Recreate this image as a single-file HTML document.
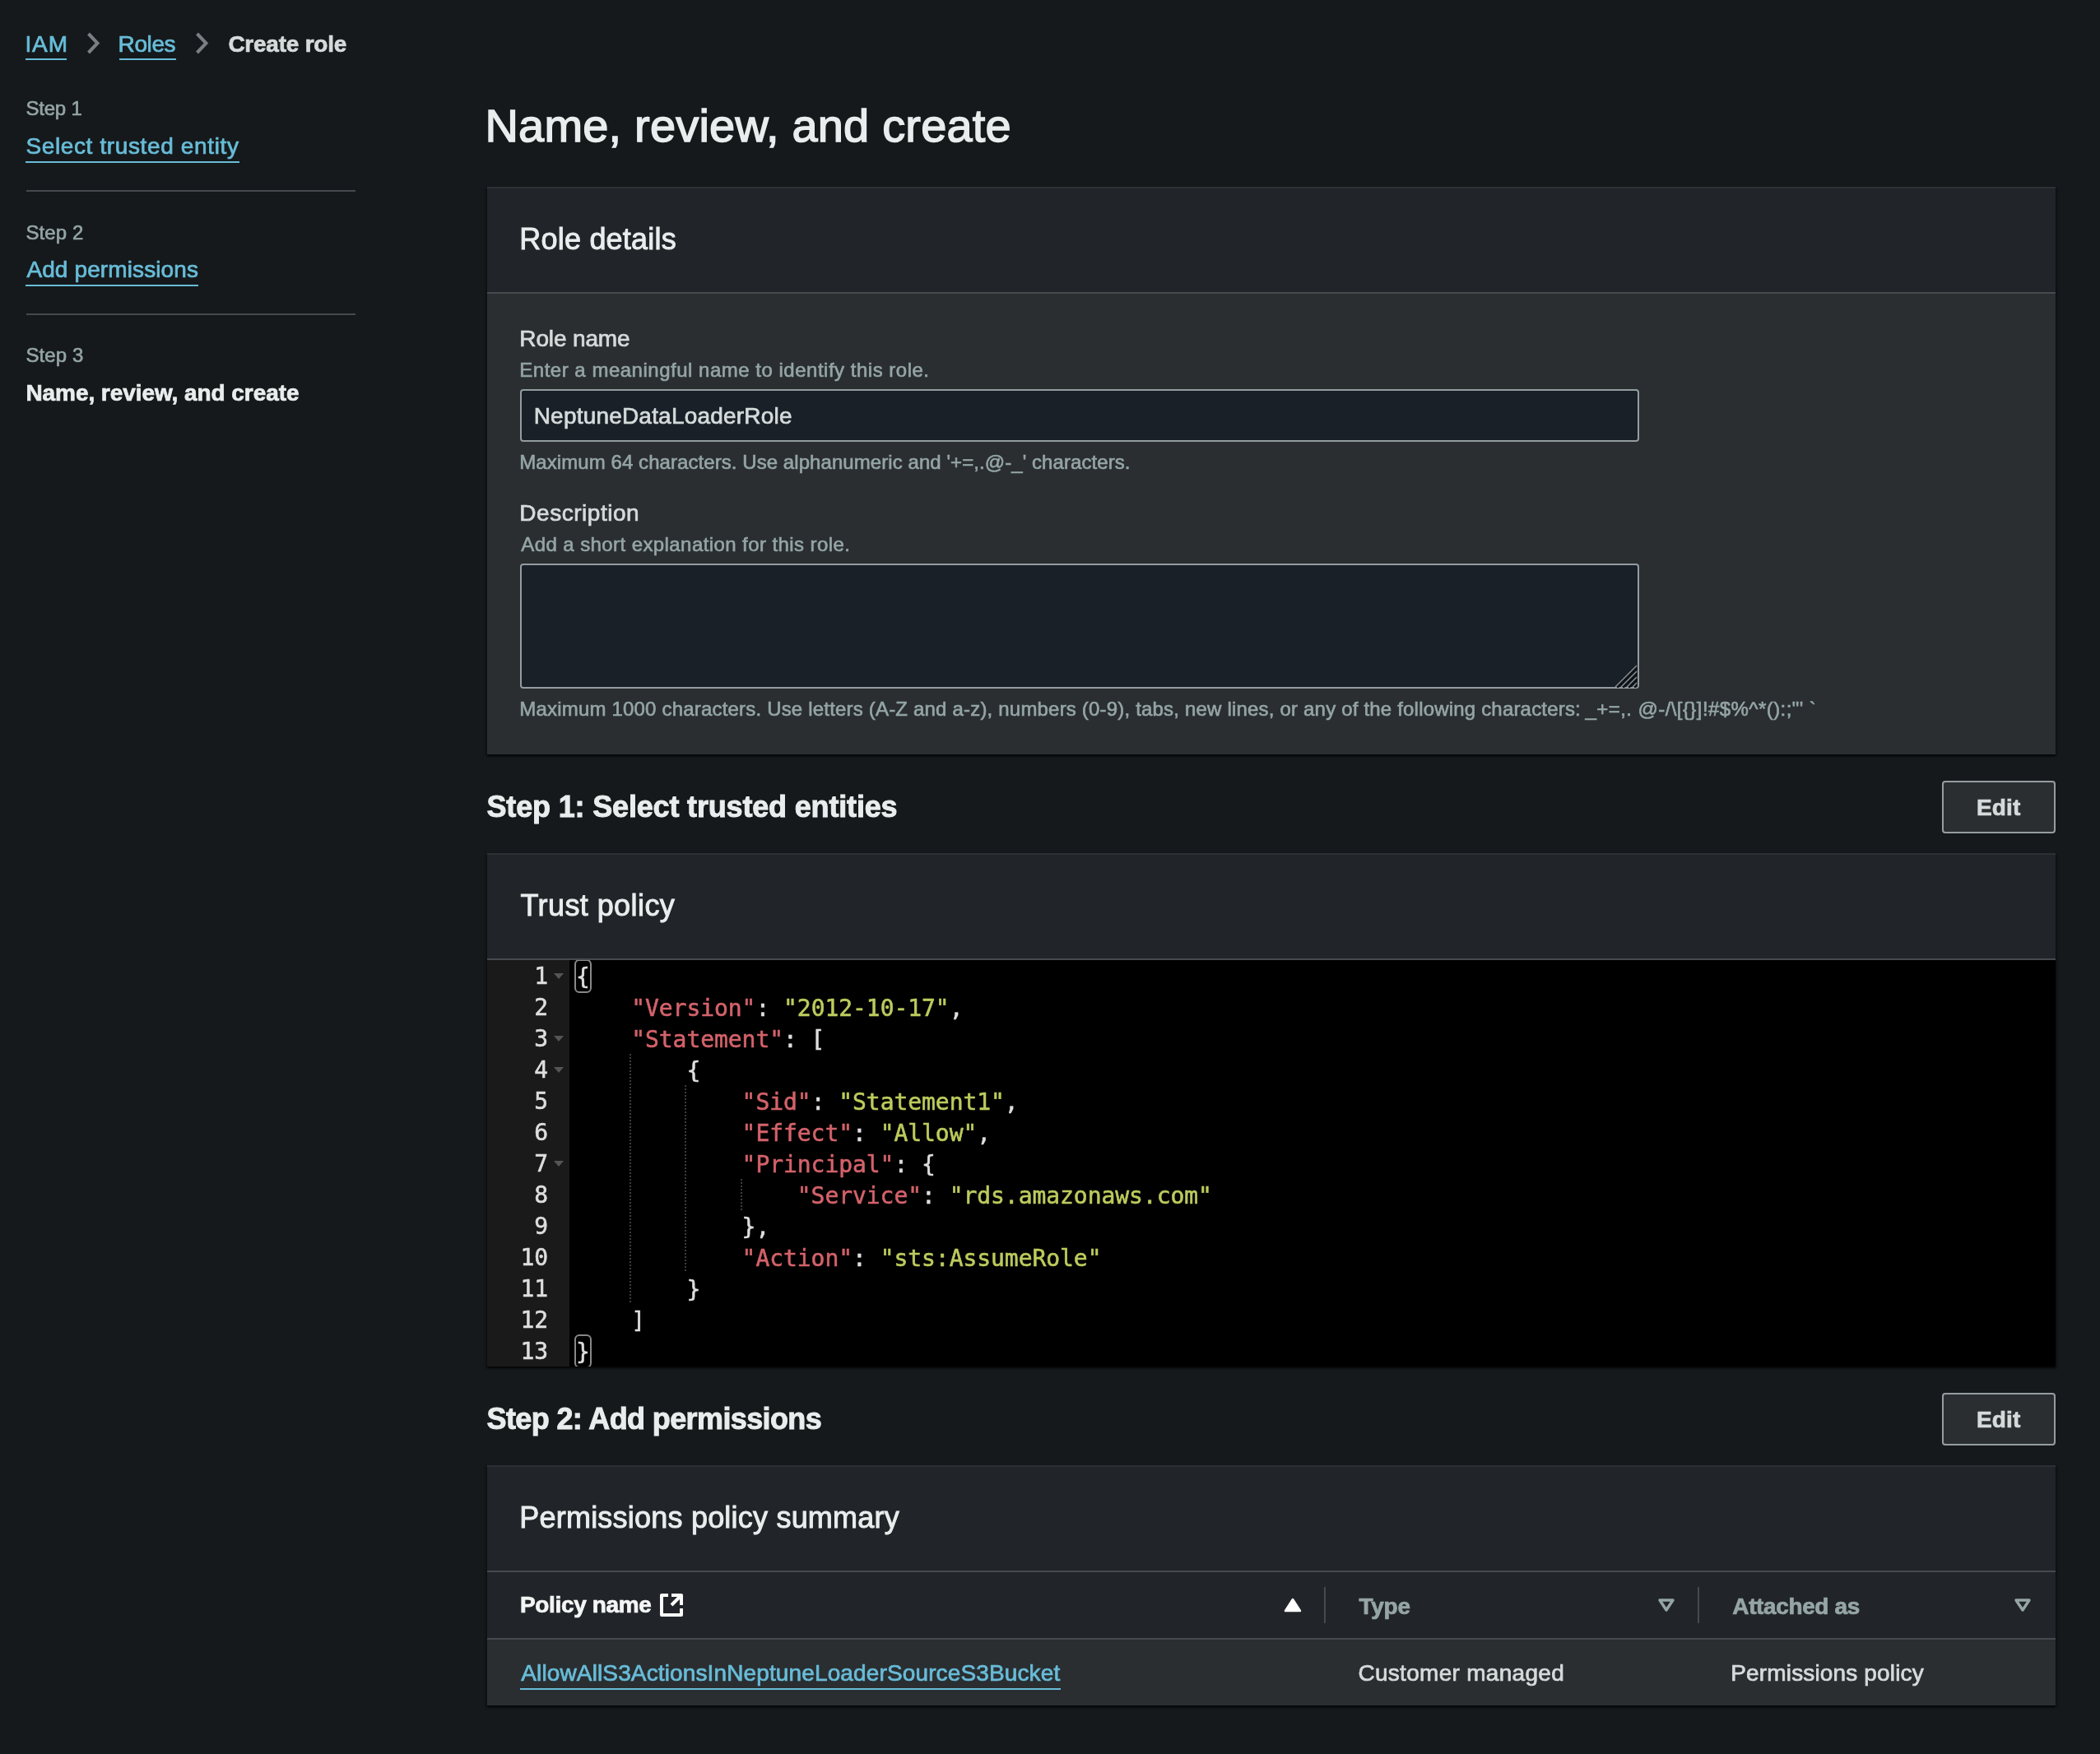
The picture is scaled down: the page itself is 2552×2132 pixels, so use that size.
<!DOCTYPE html>
<html lang="en">
<head>
<meta charset="utf-8">
<title>Create role - IAM</title>
<style>
*{margin:0;padding:0;box-sizing:border-box}
html,body{width:2552px;height:2132px;overflow:hidden;background:#15191b}
body{position:relative;font-family:"Liberation Sans", "Helvetica Neue", Arial, sans-serif;color:#d5dbdb;}
@media (max-width:1400px){html{zoom:.5}}
#root{position:absolute;left:0;top:0;width:2552px;height:2132px;will-change:transform}
.t{position:absolute;white-space:pre;line-height:1;font-weight:400;text-decoration:none;display:block;-webkit-text-stroke:0.026em}
.b{-webkit-text-stroke:0.026em}
.u{text-decoration:none}
.u::after{content:"";position:absolute;left:var(--ul,0);width:var(--uw,100%);height:2px;background:#68bcd8;bottom:var(--ub,-7px)}
.box{position:absolute}
.card{position:absolute;left:592px;width:1906px;background:#2a2e31;box-shadow:0 2px 2px 0 rgba(0,0,0,.6),2px 2px 3px 0 rgba(0,0,0,.3),-2px 2px 3px 0 rgba(0,0,0,.3)}
.card .hd{position:absolute;left:0;right:0;top:0;height:130px;background:#212428;border-top:2px solid #2d3136;border-bottom:2px solid #464a4e}
.field{position:absolute;left:632px;width:1360px;background:#1a2028;border:2px solid #939c9f;border-radius:4px}
.btn{position:absolute;left:2360px;width:138px;height:64px;background:#2a2e31;border:2px solid #969da1;border-radius:4px}
.hr{position:absolute;left:32px;width:400px;height:2px;background:#464a4e}
.code{position:absolute;left:0;top:130px;width:1906px;height:494px;background:#000;overflow:hidden;font-family:"DejaVu Sans Mono", "Liberation Mono", monospace;font-size:28px;line-height:38px;color:#dedede;-webkit-text-stroke:0.02em;letter-spacing:-0.057px}
.gut{position:absolute;left:0;top:0;width:100px;height:494px;background:#1a1a1a}
.ln{position:absolute;left:0;width:74px;height:38px;text-align:right;white-space:pre}
.fold{position:absolute;left:81px;width:0;height:0;border-left:6px solid transparent;border-right:6px solid transparent;border-top:7px solid #555}
.cl{position:absolute;left:108px;height:38px;white-space:pre}
.k{color:#d3626a}.s{color:#bdcb5d}
.br{position:absolute;width:21px;height:41px;border:2px solid #888;border-radius:6px}
.ig{position:absolute;width:2px;background:repeating-linear-gradient(to bottom,#3c3c3c 0 2px,transparent 2px 4px)}
.sep{position:absolute;width:2px;height:44px;top:1929px;background:#464a4e}
</style>
</head>
<body>
<div id="root">
<nav aria-label="Breadcrumbs">
<a class="t u" style="left:30.4px;top:39.8px;font-size:28px;color:#68bcd8;letter-spacing:0.900px;--ub:-5.7px;--ul:1.0px;--uw:49.8px">IAM</a><svg class="box" style="left:103.5px;top:35.4px" width="24" height="34" viewBox="0 0 24 34"><path d="M3.5 6 L14.5 17.5 L3.5 29" fill="none" stroke="#7b7f83" stroke-width="4" stroke-linejoin="miter"/></svg><a class="t u" style="left:143.6px;top:39.8px;font-size:28px;color:#68bcd8;letter-spacing:-0.400px;--ub:-5.7px;--ul:1.0px;--uw:69.4px">Roles</a><svg class="box" style="left:235.5px;top:35.4px" width="24" height="34" viewBox="0 0 24 34"><path d="M3.5 6 L14.5 17.5 L3.5 29" fill="none" stroke="#7b7f83" stroke-width="4" stroke-linejoin="miter"/></svg><span class="t b" style="left:277.4px;top:39.8px;font-size:28px;color:#d5dbdb;letter-spacing:-0.240px;font-weight:700">Create role</span>
</nav>
<aside>
<span class="t " style="left:31.4px;top:120.2px;font-size:24px;color:#95a5a6;letter-spacing:-0.200px">Step 1</span><a class="t u" style="left:31.4px;top:164.3px;font-size:28px;color:#68bcd8;letter-spacing:0.630px;--ub:-5.7px;--ul:0.0px;--uw:259.6px">Select trusted entity</a><div class="hr" style="top:231px"></div>
<span class="t " style="left:31.4px;top:270.7px;font-size:24px;color:#95a5a6;letter-spacing:0.100px">Step 2</span><a class="t u" style="left:32.4px;top:314.3px;font-size:28px;color:#68bcd8;letter-spacing:0.114px;--ub:-5.7px;--ul:-1.0px;--uw:209.6px">Add permissions</a><div class="hr" style="top:381px"></div>
<span class="t " style="left:31.4px;top:420.2px;font-size:24px;color:#95a5a6;letter-spacing:0.100px">Step 3</span><span class="t b" style="left:31.4px;top:464.3px;font-size:28px;color:#eaeded;letter-spacing:-0.065px;font-weight:700">Name, review, and create</span>
</aside>
<main>
<h1 class="t " style="left:589.5px;top:125.2px;font-size:56px;color:#eaeded;letter-spacing:0.183px">Name, review, and create</h1>
<section class="card" style="top:227px;height:690px"><div class="hd"></div></section>
<h2 class="t " style="left:631.3px;top:272.5px;font-size:36px;color:#eaeded;letter-spacing:0.209px">Role details</h2>
<label class="t " style="left:631.3px;top:398.0px;font-size:28px;color:#d5dbdb;letter-spacing:-0.137px">Role name</label><span class="t " style="left:631.3px;top:437.9px;font-size:24px;color:#95a5a6;letter-spacing:0.507px">Enter a meaningful name to identify this role.</span>
<div class="field" style="top:473px;height:64px"></div><span class="t " style="left:648.7px;top:491.5px;font-size:28px;color:#d5dbdb;letter-spacing:0.200px">NeptuneDataLoaderRole</span>
<span class="t " style="left:631.3px;top:550.2px;font-size:24px;color:#95a5a6;letter-spacing:0.067px">Maximum 64 characters. Use alphanumeric and &#x27;+=,.@-_&#x27; characters.</span>
<label class="t " style="left:631.3px;top:610.3px;font-size:28px;color:#d5dbdb;letter-spacing:0.530px">Description</label><span class="t " style="left:633.3px;top:649.9px;font-size:24px;color:#95a5a6;letter-spacing:0.414px">Add a short explanation for this role.</span>
<div class="field" style="top:685px;height:152px"></div><svg class="box" style="left:1962px;top:808px" width="28" height="28" viewBox="0 0 28 28" fill="none"><path d="M28 3.5 L3.5 28 M28 10.5 L10.5 28 M28 17.5 L17.5 28 M28 24.5 L24.5 28" stroke="#0c0f13" stroke-width="2"/><path d="M27 1 L1 27 M27 8 L8 27 M27 15 L15 27 M27 22 L22 27" stroke="#8d9598" stroke-width="1.25"/></svg>
<span class="t " style="left:631.3px;top:850.4px;font-size:24px;color:#95a5a6;letter-spacing:0.189px">Maximum 1000 characters. Use letters (A-Z and a-z), numbers (0-9), tabs, new lines, or any of the following characters:</span><span class="t " style="left:1926.5px;top:850.4px;font-size:24px;color:#95a5a6;letter-spacing:0.426px">_+=,. @-/\[{}]!#$%^*():;&quot;&#x27; `</span>
<h2 class="t b" style="left:591.5px;top:962.8px;font-size:36px;color:#eaeded;letter-spacing:-0.167px;font-weight:700">Step 1: Select trusted entities</h2>
<div class="btn" style="top:949px"></div><span class="t b" style="left:2402.0px;top:968.3px;font-size:28px;color:#d5dbdb;letter-spacing:0.133px;font-weight:700">Edit</span>
<section class="card" style="top:1037px;height:624px"><div class="hd"></div>
<div class="code"><div class="gut"></div><div class="ln" style="top:1px">1</div><div class="fold" style="top:16px"></div><div class="cl" style="top:2px">{</div><div class="ln" style="top:39px">2</div><div class="cl" style="top:40px">    <span class="k">&quot;Version&quot;</span>: <span class="s">&quot;2012-10-17&quot;</span>,</div><div class="ln" style="top:77px">3</div><div class="fold" style="top:92px"></div><div class="cl" style="top:78px">    <span class="k">&quot;Statement&quot;</span>: [</div><div class="ln" style="top:115px">4</div><div class="fold" style="top:130px"></div><div class="cl" style="top:116px">        {</div><div class="ln" style="top:153px">5</div><div class="cl" style="top:154px">            <span class="k">&quot;Sid&quot;</span>: <span class="s">&quot;Statement1&quot;</span>,</div><div class="ln" style="top:191px">6</div><div class="cl" style="top:192px">            <span class="k">&quot;Effect&quot;</span>: <span class="s">&quot;Allow&quot;</span>,</div><div class="ln" style="top:229px">7</div><div class="fold" style="top:244px"></div><div class="cl" style="top:230px">            <span class="k">&quot;Principal&quot;</span>: {</div><div class="ln" style="top:267px">8</div><div class="cl" style="top:268px">                <span class="k">&quot;Service&quot;</span>: <span class="s">&quot;rds.amazonaws.com&quot;</span></div><div class="ln" style="top:305px">9</div><div class="cl" style="top:306px">            },</div><div class="ln" style="top:343px">10</div><div class="cl" style="top:344px">            <span class="k">&quot;Action&quot;</span>: <span class="s">&quot;sts:AssumeRole&quot;</span></div><div class="ln" style="top:381px">11</div><div class="cl" style="top:382px">        }</div><div class="ln" style="top:419px">12</div><div class="cl" style="top:420px">    ]</div><div class="ln" style="top:457px">13</div><div class="cl" style="top:458px">}</div><div class="ig" style="left:173.2px;top:114px;height:304px"></div><div class="ig" style="left:240.4px;top:152px;height:228px"></div><div class="ig" style="left:307.6px;top:266px;height:38px"></div><div class="br" style="left:106px;top:-1px"></div><div class="br" style="left:106px;top:455px"></div></div>
</section>
<h2 class="t " style="left:632.5px;top:1082.8px;font-size:36px;color:#eaeded;letter-spacing:0.418px">Trust policy</h2>
<h2 class="t b" style="left:591.5px;top:1706.8px;font-size:36px;color:#eaeded;letter-spacing:-0.614px;font-weight:700">Step 2: Add permissions</h2>
<div class="btn" style="top:1693px"></div><span class="t b" style="left:2402.0px;top:1712.3px;font-size:28px;color:#d5dbdb;letter-spacing:0.133px;font-weight:700">Edit</span>
<section class="card" style="top:1781px;height:292px"><div class="hd"></div>
<div class="box" style="left:0;top:130px;width:1906px;height:82px;background:#212428;border-bottom:2px solid #464a4e"></div>
</section>
<h2 class="t " style="left:631.3px;top:1826.5px;font-size:36px;color:#eaeded;letter-spacing:0.212px">Permissions policy summary</h2>
<span class="t b" style="left:632.0px;top:1936.8px;font-size:28px;color:#f4f5f5;letter-spacing:-0.350px;font-weight:700">Policy name</span><svg class="box" style="left:800px;top:1935px" width="32" height="32" viewBox="0 0 16 16" fill="none" stroke="#fbfbfb" stroke-width="2" stroke-linejoin="round"><path d="M14 10v4H2V2h4"/><path d="M8 2h6v6"/><path d="M14 2L8 8"/></svg><svg class="box" style="left:1559px;top:1941px" width="24" height="20" viewBox="0 0 24 20"><path d="M12 3 L21 17 L3 17 Z" fill="#fff" stroke="#fff" stroke-width="2.5" stroke-linejoin="round"/></svg><div class="sep" style="left:1609px"></div>
<span class="t b" style="left:1651.4px;top:1938.6px;font-size:28px;color:#95a5a6;letter-spacing:-0.233px;font-weight:700">Type</span><svg class="box" style="left:2013px;top:1941px" width="24" height="20" viewBox="0 0 24 20"><path d="M4 4 L20 4 L12 16 Z" fill="none" stroke="#95a5a6" stroke-width="3.4" stroke-linejoin="round"/></svg><div class="sep" style="left:2063px"></div>
<span class="t b" style="left:2105.3px;top:1938.6px;font-size:28px;color:#95a5a6;letter-spacing:-0.380px;font-weight:700">Attached as</span><svg class="box" style="left:2446px;top:1941px" width="24" height="20" viewBox="0 0 24 20"><path d="M4 4 L20 4 L12 16 Z" fill="none" stroke="#95a5a6" stroke-width="3.4" stroke-linejoin="round"/></svg>
<a class="t u" style="left:633.3px;top:2020.3px;font-size:28px;color:#68bcd8;letter-spacing:0.129px;--ub:-5.7px;--ul:-1.0px;--uw:656.8px">AllowAllS3ActionsInNeptuneLoaderSourceS3Bucket</a><span class="t " style="left:1650.4px;top:2020.3px;font-size:28px;color:#d5dbdb;letter-spacing:0.300px">Customer managed</span><span class="t " style="left:2103.3px;top:2020.3px;font-size:28px;color:#d5dbdb;letter-spacing:0.147px">Permissions policy</span>
</main>
</div>
</body>
</html>
